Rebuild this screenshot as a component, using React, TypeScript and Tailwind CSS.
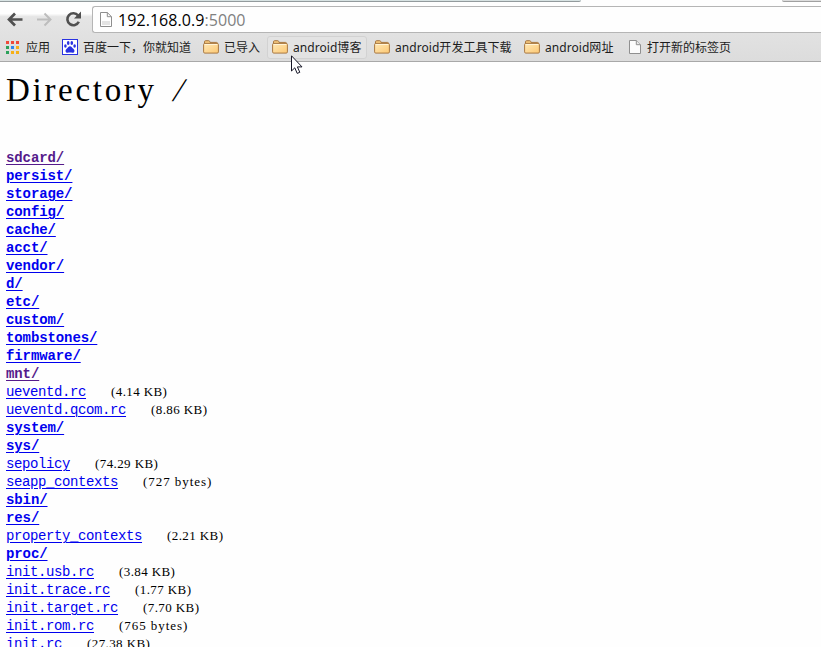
type Entry = { name: string; size?: string; visited?: boolean };

const entries: Entry[] = [
  { name: 'sdcard/', visited: true },
  { name: 'persist/' },
  { name: 'storage/' },
  { name: 'config/' },
  { name: 'cache/' },
  { name: 'acct/' },
  { name: 'vendor/' },
  { name: 'd/' },
  { name: 'etc/' },
  { name: 'custom/' },
  { name: 'tombstones/' },
  { name: 'firmware/' },
  { name: 'mnt/', visited: true },
  { name: 'ueventd.rc', size: '4.14 KB' },
  { name: 'ueventd.qcom.rc', size: '8.86 KB' },
  { name: 'system/' },
  { name: 'sys/' },
  { name: 'sepolicy', size: '74.29 KB' },
  { name: 'seapp_contexts', size: '727 bytes' },
  { name: 'sbin/' },
  { name: 'res/' },
  { name: 'property_contexts', size: '2.21 KB' },
  { name: 'proc/' },
  { name: 'init.usb.rc', size: '3.84 KB' },
  { name: 'init.trace.rc', size: '1.77 KB' },
  { name: 'init.target.rc', size: '7.70 KB' },
  { name: 'init.rom.rc', size: '765 bytes' },
  { name: 'init.rc', size: '27.38 KB' },
];

function Folder() {
  return (
    <svg width="16" height="14" viewBox="0 0 16 14" className="-mt-[2px] shrink-0">
      <defs>
        <linearGradient id="folder" x1="0" y1="0" x2="1" y2="1">
          <stop offset="0" stopColor="#ffe9b8" />
          <stop offset="1" stopColor="#fcc873" />
        </linearGradient>
      </defs>
      <path d="M1.500 4V1.800Q1.500.7 2.600.7h3.100q.8 0 1 .8l.3.9h6.500q1 0 1 1V5" fill="#f3c67c" stroke="#a87842" />
      <rect x=".6" y="3.400" width="14.800" height="9.700" rx="1.200" fill="url(#folder)" stroke="#a87842" />
      <path d="M1.700 4.500h12.600" stroke="#fff4d8" />
    </svg>
  );
}

function Page() {
  return (
    <svg width="12" height="14" viewBox="0 0 12 14" className="-mt-px shrink-0">
      <path d="M.5.5h6.800l4.200 4.200v8.800H.5z" fill="#fcfcfc" stroke="#909090" />
      <path d="M7.300.5v4.200h4.200" fill="#e8e8e8" stroke="#909090" />
    </svg>
  );
}

function Paw() {
  return (
    <svg width="16" height="16" viewBox="0 0 16 16" className="-mt-px shrink-0">
      <rect x=".5" y=".5" width="15" height="15" fill="#fff" stroke="#2932e1" />
      <g fill="#2932e1">
        <ellipse cx="3.400" cy="7" rx="1.300" ry="1.800" />
        <ellipse cx="6.200" cy="4" rx="1.300" ry="1.900" />
        <ellipse cx="9.800" cy="4" rx="1.300" ry="1.900" />
        <ellipse cx="12.600" cy="7" rx="1.300" ry="1.800" />
        <path d="M8 7.200c1.500 0 1.900 1.400 3 2.400 1.200 1 1.900 2 1.200 3.300-.9 1.300-2.700.6-4.200.6s-3.300.7-4.200-.6c-.7-1.300 0-2.300 1.200-3.300C6.100 8.600 6.500 7.200 8 7.200z" />
      </g>
    </svg>
  );
}

const appColors = [
  'bg-[#f04a3a]', 'bg-[#f04a3a]', 'bg-[#f04a3a]',
  'bg-[#2ba15a]', 'bg-[#2f86ee]', 'bg-[#f6b017]',
  'bg-[#2ba15a]', 'bg-[#f6b017]', 'bg-[#f6b017]',
];

function Toolbar() {
  return (
    <div className="flex h-[32px] pl-[7px]">
      <div className="flex w-[85px] pt-[8px]">
        <svg width="76" height="18" viewBox="0 0 76 18" fill="none">
          <path d="M15.500 9.500H2.500M8 3.500l-6 6 6 6" stroke="#505050" strokeWidth="2.700" />
          <path d="M30 9.500h12.500M37.500 3.500l6 6-6 6" stroke="#bdbdbd" strokeWidth="2" />
          <path d="M71.800 11.800a6 6 0 1 1-.7-6.300" stroke="#505050" strokeWidth="2.600" />
          <path d="M74 1.500v7h-7z" fill="#505050" />
        </svg>
      </div>
      <div className="mt-[4px] flex h-[27px] flex-1 items-center rounded-l-[3px] border border-r-0 border-[#b5b5b5] bg-[#fefefe] pl-[7px]">
        <svg width="12" height="15" viewBox="0 0 12 15">
          <path d="M.5.5h6.800l4.200 4.200v9.800H.5z" fill="#fff" stroke="#8e8e8e" />
          <path d="M7.300.5v4.200h4.200" stroke="#8e8e8e" fill="none" />
          <path d="M2 9h8v4H2z" fill="#e4e4e4" />
        </svg>
        <span className="ml-[6px] whitespace-nowrap font-['Open_Sans',sans-serif] text-[16px] leading-5 tracking-[0.06px] text-black">
          192.168.0.9<span className="text-[#808080]">:5000</span>
        </span>
      </div>
    </div>
  );
}

const label = "whitespace-nowrap font-['Noto_Sans','Noto_Sans_CJK_SC',sans-serif] text-[12px] leading-4 text-[#1c1c1c]";

function Bookmarks() {
  return (
    <div className="flex h-[28px] items-center border-b border-[#a8a8a8] pl-[6px]">
      <div className="flex w-[56px] items-center gap-[6px]">
        <div className="grid grid-cols-3 gap-px">
          {appColors.map((color, i) => (
            <span key={i} className={'mr-px mb-px size-[3px] ' + color} />
          ))}
        </div>
        <span className={label}>应用</span>
      </div>
      <div className="flex w-[141px] items-center gap-[5px]"><Paw /><span className={label}>百度一下，你就知道</span></div>
      <div className="flex w-[64px] items-center gap-[5px]"><Folder /><span className={label}>已导入</span></div>
      <div className="flex h-[23px] w-[100px] items-center gap-[5px] rounded-[3px] border border-[#d2d2d2] bg-[#e3e3e3] pl-[4px]"><Folder /><span className={label + ' tracking-[0.05px]'}>android博客</span></div>
      <div className="flex w-[157px] items-center gap-[5px] pl-[7px]"><Folder /><span className={label + ' tracking-[0.05px]'}>android开发工具下载</span></div>
      <div className="flex w-[98px] items-center gap-[5px]"><Folder /><span className={label + ' tracking-[0.05px]'}>android网址</span></div>
      <div className="flex items-center gap-[6px] pl-[7px]"><Page /><span className={label}>打开新的标签页</span></div>
    </div>
  );
}

export default function App() {
  return (
    <div className="relative h-[647px] w-[821px] overflow-hidden bg-[#fefefe]">
      <header className="bg-linear-to-b from-[#fefefe] from-22% via-[#e5e5e5] via-27% to-[#dcdcdc]">
        <div className="flex h-[2px]">
          <div className="w-[581px] rounded-br border-b border-[#939b9d] bg-[#d8e3e3]" />
          <div className="w-[201px] bg-[#fefefe]" />
          <div className="flex-1 rounded-bl border-b border-[#a0a0a0] bg-[#ddd]" />
        </div>
        <Toolbar />
        <Bookmarks />
      </header>
      <main className="pl-[6px]">
        <h1 className="h-[87px] pt-[8px] font-['Liberation_Serif',serif] text-[33px] leading-[40px] tracking-[2.7px] whitespace-pre text-black">Directory <span className="ml-[7px] inline-block -skew-x-[16deg]">/</span></h1>
        <ul className="font-['Liberation_Mono',monospace]">
          {entries.map((entry) => (
            <li key={entry.name} className="flex h-[18px] items-center whitespace-nowrap">
              <a
                className={
                  'text-[14px] leading-[18px] underline decoration-1 underline-offset-2 ' +
                  (entry.size ? 'tracking-[-0.4px] ' : 'font-bold tracking-[-0.1px] ') +
                  (entry.visited ? 'text-[#551a8b]' : 'text-[#0000ee]')
                }
              >
                {entry.name}
              </a>
              {entry.size && (
                <span
                  className={
                    "ml-[25px] font-['Liberation_Serif',serif] text-[13px] leading-[18px] text-black " +
                    (entry.size.endsWith('bytes') ? 'tracking-[0.95px]' : 'tracking-[0.4px]')
                  }
                >
                  ({entry.size})
                </span>
              )}
            </li>
          ))}
        </ul>
      </main>
      <svg className="absolute top-[55px] left-[291px]" width="12" height="20" viewBox="0 0 12 20">
        <path d="M.5.800v15.200l3.300-3.200 2.400 5.600 2.600-1.100-2.400-5.400h4.600z" fill="#fff" stroke="#151525" />
      </svg>
    </div>
  );
}
